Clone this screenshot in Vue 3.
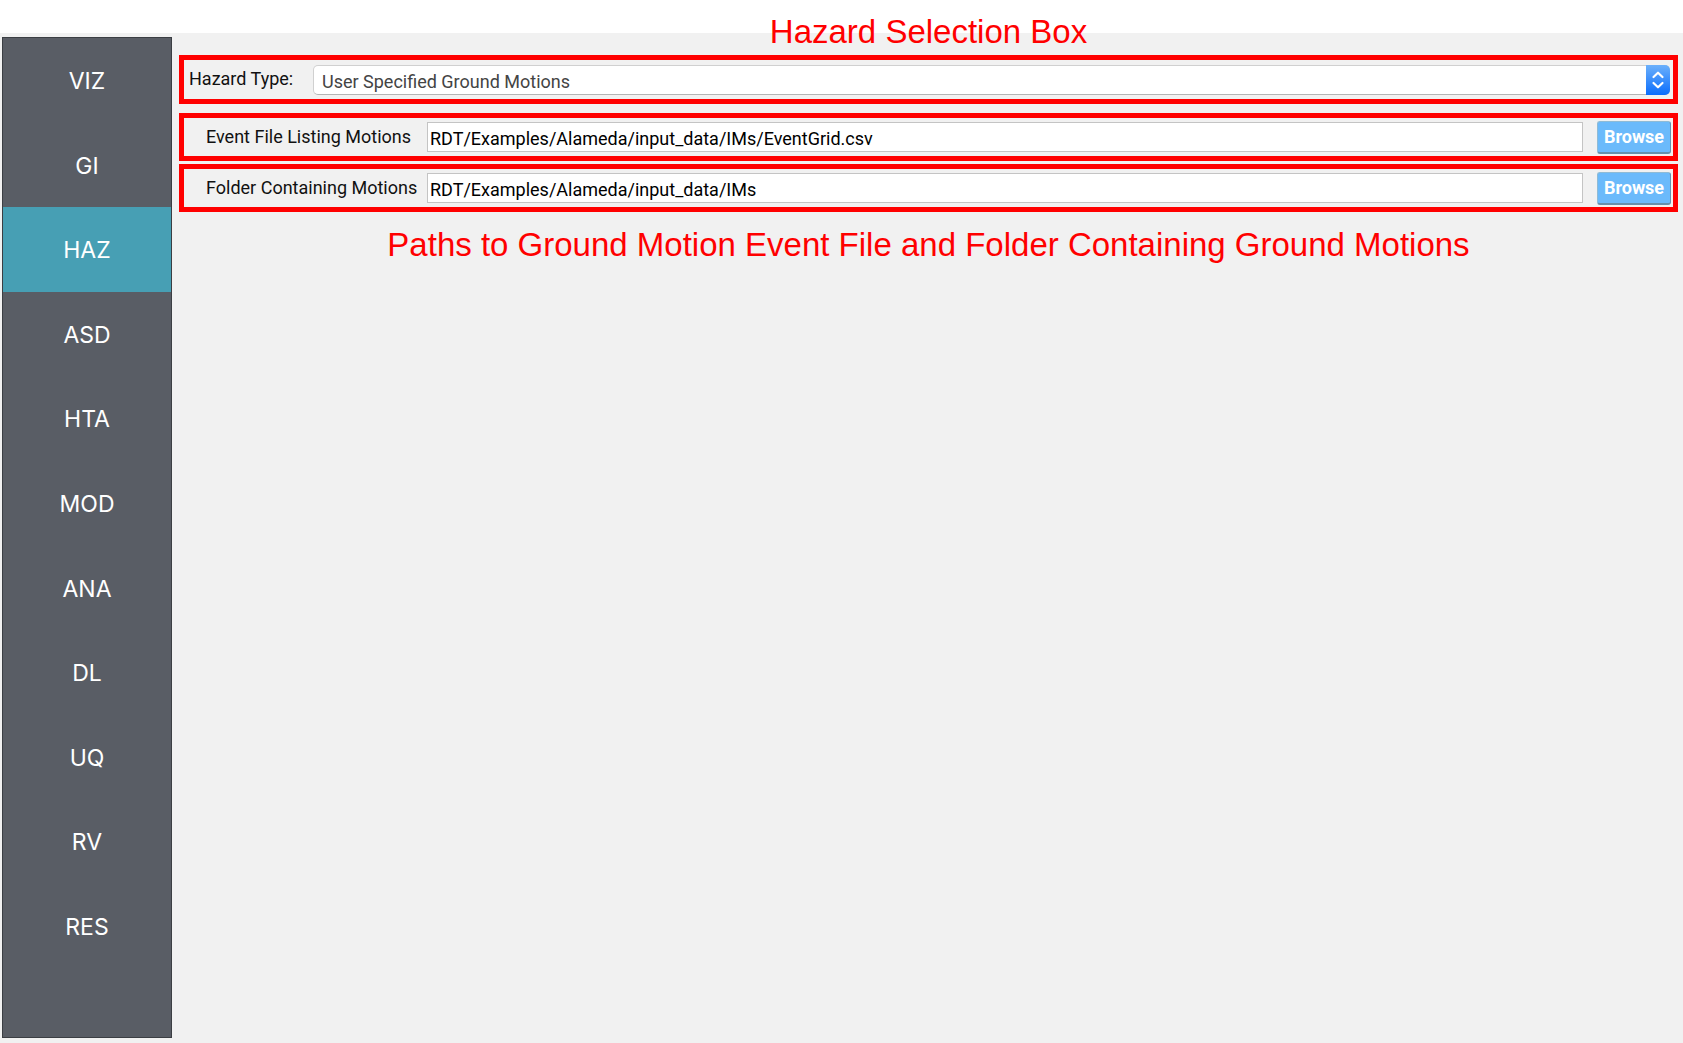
<script setup>
import { ref } from 'vue'

const steps = ['VIZ', 'GI', 'HAZ', 'ASD', 'HTA', 'MOD', 'ANA', 'DL', 'UQ', 'RV', 'RES']
const active = ref('HAZ')

const hazardTypes = ['User Specified Ground Motions']
const hazardType = ref(hazardTypes[0])

const paths = ref([
  { id: 'event-file', label: 'Event File Listing Motions', value: 'RDT/Examples/Alameda/input_data/IMs/EventGrid.csv' },
  { id: 'motion-folder', label: 'Folder Containing Motions', value: 'RDT/Examples/Alameda/input_data/IMs' },
])
</script>

<template>
  <div class="page">
    <nav class="sidebar">
      <button
        v-for="step in steps"
        :key="step"
        type="button"
        class="step"
        :class="{ active: step === active }"
        @click="active = step"
      >{{ step }}</button>
    </nav>

    <main class="content">
      <h1 class="caption">Hazard Selection Box</h1>

      <section class="frame hazard">
        <label class="hazard-label" for="hazard-type">Hazard Type:</label>
        <div class="picker">
          <select id="hazard-type" v-model="hazardType">
            <option v-for="type in hazardTypes" :key="type">{{ type }}</option>
          </select>
          <span class="stepper" aria-hidden="true">
            <svg viewBox="0 0 24 30" width="24" height="30" fill="none" stroke="#fff" stroke-width="2.2" stroke-linecap="round" stroke-linejoin="round">
              <path d="M7.5 12 12 7.7 16.5 12M7.5 18 12 22.3 16.5 18" />
            </svg>
          </span>
        </div>
      </section>

      <section v-for="path in paths" :key="path.id" class="frame path">
        <label class="path-label" :for="path.id">{{ path.label }}</label>
        <input :id="path.id" v-model="path.value" class="path-input" type="text" spellcheck="false" />
        <button class="browse" type="button">Browse</button>
      </section>

      <h2 class="caption">Paths to Ground Motion Event File and Folder Containing Ground Motions</h2>
    </main>
  </div>
</template>

<style>
body {
  margin: 0;
  background: #fff;
}
</style>

<style scoped>
.page {
  box-sizing: border-box;
  display: flex;
  gap: 7px;
  min-height: 100vh;
  padding: 0 5px 5px 2px;
  background: linear-gradient(#fff 33px, #f1f1f1 33px);
  font-family: Roboto, sans-serif;
}

.sidebar {
  box-sizing: border-box;
  flex: none;
  display: flex;
  flex-direction: column;
  width: 170px;
  margin-top: 37px;
  padding-bottom: 69px;
  border: 1px solid #3b3e43;
  background: #595d65;
}

.step {
  flex: 1;
  padding: 2px 0 0;
  border: 0;
  background: none;
  color: #fff;
  font: 400 23px/28px Inter, sans-serif;
}

.step.active {
  background: #479fb4;
}

.content {
  flex: 1;
  min-width: 0;
  padding-top: 12px;
}

.caption {
  margin: 0;
  color: #f00;
  font: 400 33px/40px "Liberation Sans", Arial, sans-serif;
  text-align: center;
}

.frame {
  box-sizing: border-box;
  display: flex;
  align-items: center;
  border: 5px solid #f00;
}

.hazard {
  height: 49px;
  margin: 3px 0 9px;
  padding: 0 3px 0 5px;
}

.hazard-label {
  flex: none;
  width: 124px;
  padding-bottom: 2px;
  color: #111;
  font-size: 18px;
  line-height: 20px;
}

.picker {
  position: relative;
  flex: 1;
  display: flex;
}

.picker select {
  flex: 1;
  box-sizing: border-box;
  height: 30px;
  padding: 4px 32px 0 8px;
  border: 1px solid #d0d0d0;
  border-bottom-color: #b4b4b4;
  border-radius: 5px;
  appearance: none;
  background: #fff;
  color: #444;
  font: 400 18px/24px Roboto, sans-serif;
}

.stepper {
  position: absolute;
  top: 0;
  right: 0;
  width: 24px;
  height: 30px;
  border-radius: 0 5px 5px 0;
  background: linear-gradient(#6cb0fb, #0a6dfd);
  pointer-events: none;
}

.stepper svg {
  display: block;
}

.path {
  height: 48px;
  margin-bottom: 3px;
  padding: 0 2px 0 22px;
}

.path-label {
  flex: none;
  width: 221px;
  color: #111;
  font-size: 18px;
  line-height: 20px;
}

.path-input {
  flex: 1;
  box-sizing: border-box;
  min-width: 0;
  height: 30px;
  margin-right: 14px;
  padding: 2px 2px 0;
  border: 1px solid #c4c4c4;
  background: #fff;
  color: #000;
  font: 400 18px/24px Roboto, sans-serif;
}

.browse {
  flex: none;
  width: 74px;
  height: 33px;
  padding: 0;
  border: 1px solid #8fbbd6;
  border-right-color: #6590ad;
  border-bottom: 2px solid #6590ad;
  border-radius: 3px;
  background: #6bbafb;
  color: #fff;
  font: 700 18px/24px Roboto, sans-serif;
}

.path + .caption {
  padding-top: 10px;
}
</style>
